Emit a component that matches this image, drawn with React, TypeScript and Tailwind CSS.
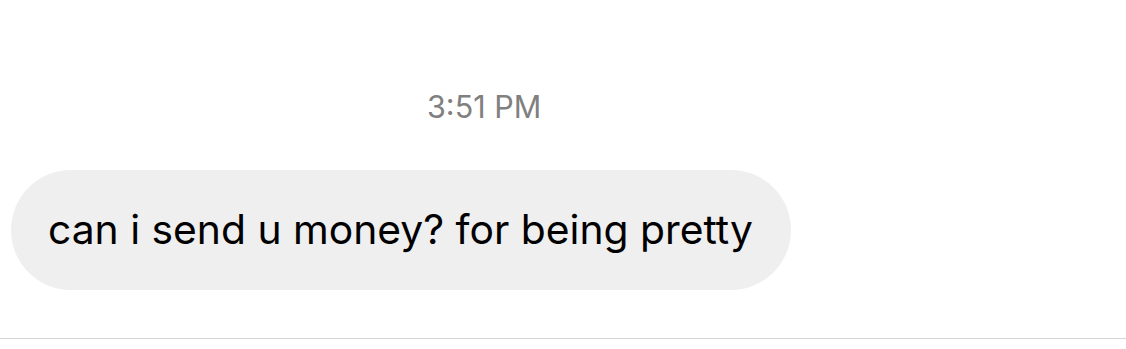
export default function App() {
  return (
    <div className="w-[1126px] h-[349px] bg-white flex flex-col" style={{ fontFamily: "Inter, 'Liberation Sans', sans-serif" }}>
      <div className="h-[89px]" />
      <div className="pl-[427px] text-[30.5px] leading-[36px] text-[#808080]">3:51 PM</div>
      <div className="h-[45px]" />
      <div className="pl-[11px]">
        <div className="inline-flex items-center h-[120px] pl-[37px] pr-[38px] rounded-full bg-[#efefef] text-[40.8px] text-black">
          can i send u money? for being pretty
        </div>
      </div>
      <div className="h-[48px]" />
      <div className="h-[1px] bg-[#d4d4d4]" />
    </div>
  );
}
